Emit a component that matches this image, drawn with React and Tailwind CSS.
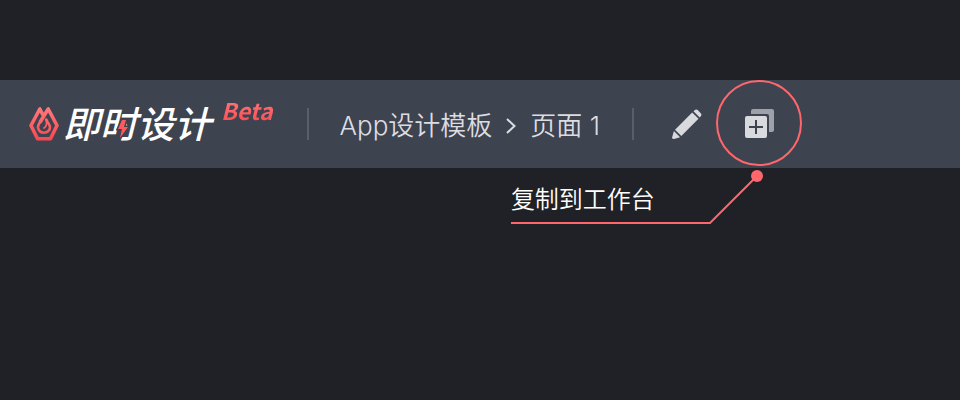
const cjk = "font-['Inter','Noto_Sans_CJK_SC',sans-serif]";

function LogoMark() {
  return (
    <svg className="h-[34px] w-[30px] shrink-0" viewBox="0 0 30 34" fill="none" aria-hidden="true">
      <defs>
        <linearGradient id="mark" gradientUnits="userSpaceOnUse" x1="0" y1="0" x2="0" y2="34">
          <stop offset="0" stopColor="#ff7a7d" />
          <stop offset="1" stopColor="#f7474f" />
        </linearGradient>
      </defs>
      <g stroke="url(#mark)" strokeLinejoin="round" strokeLinecap="round">
        <path d="M14 8 L10.800 2 L2 18.500 L8.500 31.800 H21.500 L28 18.500 L19.200 2 L11.500 14.500" strokeWidth="3.600" />
        <path d="M11.500 14.500 C9.300 17.500 8.800 18.800 9 20.500 C9.600 24 12 25.700 15 25.700 C18.500 25.700 21.200 23 21 20 C20.700 17.500 18.500 15.500 17.300 12.500" strokeWidth="2.600" />
        <path d="M17.200 13 C18.200 17 17.800 19.500 15 21" strokeWidth="1.800" />
      </g>
    </svg>
  );
}

function Logo() {
  return (
    <a href="#" className="flex items-center" aria-label="即时设计 Beta">
      <LogoMark />
      <span className="relative mb-1 ml-1 font-['Noto_Sans_CJK_SC',sans-serif] text-[37px] leading-[44px] font-medium text-white italic">
        即时设计
        <svg className="absolute top-[18px] left-[53px] h-[22px] w-[14px]" viewBox="-2 -2 14 22" aria-hidden="true">
          <path
            className="[paint-order:stroke]"
            d="M4 0 L0 9 H4 L2 18 L10 7 H6 L8 0 Z"
            fill="#fb5a60"
            stroke="#3e4350"
            strokeWidth="3"
          />
        </svg>
      </span>
      <span className="mb-7 ml-2.5 bg-linear-to-b from-[#ff777a] to-[#f94d55] bg-clip-text pr-0.5 font-['Noto_Sans_CJK_SC',sans-serif] text-[23px] leading-6 font-bold text-transparent italic">
        Beta
      </span>
    </a>
  );
}

function Divider() {
  return <span className="h-8 w-0.5 shrink-0 bg-[#5a5e6b]" />;
}

function Callout() {
  return (
    <div className="pointer-events-none absolute top-[-1px] left-[-206px] w-[292px]">
      <svg className="block h-[144px] w-[292px]" viewBox="0 0 292 144" fill="none" aria-hidden="true">
        <circle cx="248" cy="43" r="42" stroke="#ff676c" strokeWidth="2" />
        <path d="M0 143 H199 L246 96" stroke="#ff676c" strokeWidth="2" />
        <circle cx="246" cy="96" r="6" fill="#ff676c" />
      </svg>
      <p className={"absolute bottom-2 left-0 text-2xl leading-8 font-[350] whitespace-nowrap text-white " + cjk}>复制到工作台</p>
    </div>
  );
}

export default function App() {
  return (
    <div className="min-h-screen bg-[#202126] pt-20">
      <header className="flex h-[88px] items-center bg-[#3e4350] pl-[29px]">
        <Logo />
        <span className="w-8" />
        <Divider />
        <nav className={"mr-8 ml-[31px] flex items-center pt-1 text-[26px] leading-9 font-[350] whitespace-nowrap text-[#dcdde1] " + cjk}>
          <a href="#">App设计模板</a>
          <svg className="mx-3.5 h-4 w-[10px]" viewBox="0 0 10 16" fill="none" aria-hidden="true">
            <path d="M1 1 L8.500 8 L1 15" stroke="#dcdde1" strokeWidth="2" />
          </svg>
          <a href="#">页面 1</a>
        </nav>
        <Divider />
        <button type="button" aria-label="编辑" className="ml-[38px]">
          <svg className="block h-[30px] w-[30px]" viewBox="0 0 30 30" fill="#d9dade" aria-hidden="true">
            <path d="M20.200 3.500 L26.500 9.800 L9.300 27 L3 20.700 Z" />
            <path d="M21.500 2.300 L23.300 .8 Q24.600 0 25.700 1 L29 4.500 Q30 5.700 29 6.900 L27.700 8.500 Z" />
            <path d="M1.900 21.900 L8.100 28.200 L2 30 Q0 30.200 .2 28 Z" />
          </svg>
        </button>
        <div className="relative ml-[15px] h-[86px] w-[86px]">
          <button type="button" aria-label="复制到工作台" className="flex h-full w-full items-center justify-center">
            <svg className="block h-[30px] w-[30px]" viewBox="0 0 30 30" aria-hidden="true">
              <path d="M6 2 Q6 0 8 0 H27 Q29 0 29 2 V21 Q29 23 27 23 H24 V7 Q24 5 22 5 H6 Z" fill="#9fa1a8" />
              <rect x="0" y="7" width="22" height="22" rx="2" fill="#d9dade" />
              <path d="M11 11 V25 M4 18 H18" stroke="#3e4350" strokeWidth="2" />
            </svg>
          </button>
          <Callout />
        </div>
      </header>
    </div>
  );
}
